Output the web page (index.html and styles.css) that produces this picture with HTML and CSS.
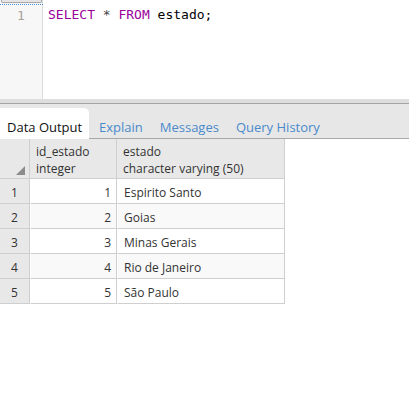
FILE: index.html
```html
<!DOCTYPE html>
<html>
<head>
<meta charset="utf-8">
<link rel="stylesheet" href="styles.css">
</head>
<body>
<div class="editor">
  <div class="focus-frag"></div>
  <div class="gutter"><span class="lineno">1</span></div>
  <div class="code"><span class="kw">SELECT</span> <span class="op">*</span> <span class="kw">FROM</span> estado;</div>
</div>
<div class="splitter"></div>
<div class="tabbar">
  <div class="tab active">Data Output</div>
  <div class="tab">Explain</div>
  <div class="tab">Messages</div>
  <div class="tab">Query History</div>
</div>
<table class="grid">
  <thead>
    <tr>
      <th class="rn"><span class="corner"></span></th>
      <th class="c1">id_estado<br>integer</th>
      <th class="c2">estado<br>character varying (50)</th>
    </tr>
  </thead>
  <tbody>
    <tr><td class="rn">1</td><td class="num">1</td><td>Espirito Santo</td></tr>
    <tr class="odd"><td class="rn">2</td><td class="num">2</td><td>Goias</td></tr>
    <tr><td class="rn">3</td><td class="num">3</td><td>Minas Gerais</td></tr>
    <tr class="odd"><td class="rn">4</td><td class="num">4</td><td>Rio de Janeiro</td></tr>
    <tr><td class="rn">5</td><td class="num">5</td><td>São Paulo</td></tr>
  </tbody>
</table>
</body>
</html>
```
FILE: styles.css
```css
* { box-sizing: border-box; }
html, body { margin: 0; padding: 0; background: #fff; }
body { font-family: "Open Sans", sans-serif; font-size: 13px; color: #222; width: 409px; height: 411px; overflow: hidden; }

.editor { position: relative; height: 99px; display: flex; }
.focus-frag {
  position: absolute; left: 0; top: -3px; width: 43px; height: 8px;
  border-bottom: 1px dotted #4a90d9;
}
.focus-frag::before {
  content: ""; position: absolute; left: 1px; right: 1px; top: 0; height: 5px;
  background: #e4e4e4; border: 1px solid #a8a8a8; border-top: none; border-radius: 0 0 2px 2px;
}
.gutter { width: 43px; background: #f7f7f7; border-right: 1px solid #dcdcdc; padding-top: 6px; text-align: center; }
.lineno { font-family: "DejaVu Sans Mono", monospace; font-size: 13px; color: #a8a29a; }
.code { padding: 6px 0 0 5px; font-family: "DejaVu Sans Mono", monospace; font-size: 13px; line-height: 17px; color: #000; white-space: pre; }
.kw { color: #990099; }
.op { color: #444; }

.splitter { height: 5px; background: #dedede; border-bottom: 1px solid #a4a4a4; }

.tabbar { display: flex; align-items: flex-end; height: 35px; background: #e7e7e7; border-bottom: 1px solid #a8a8a8; }
.tab { height: 30px; line-height: 26px; padding: 5px 7px 0 10px; color: #4a8acb; font-size: 13px; margin-bottom: -1px; white-space: nowrap; }
.tab.active { height: 31px; width: 89px; padding: 6px 0 0 7px; background: #fff; color: #111; border-top-right-radius: 5px; }

.grid { border-collapse: separate; border-spacing: 0; font-size: 12px; color: #333; }
.grid th, .grid td { padding: 0; border-right: 1px solid #cfcfcf; border-bottom: 1px solid #cfcfcf; border-left: 1px solid #fff; }
.grid th { background: #e8e8e8; height: 40px; text-align: left; font-weight: normal; vertical-align: top; line-height: 17px; padding: 4px 5px 0 6px; border-left: none; }
.grid th.rn { width: 30px; position: relative; padding: 0; }
.corner {
  position: absolute; right: 4px; bottom: 3px; width: 0; height: 0;
  border-left: 9px solid transparent; border-bottom: 9px solid #8c8c8c;
}
.grid th.c1 { width: 87px; }
.grid th.c2 { width: 168px; }
.grid td { height: 25px; line-height: 21px; padding: 3px 6px 0 6px; background: #fff; vertical-align: top; }
.grid td.rn { background: #e8e8e8; text-align: center; padding: 3px 0 0 0; border-left: none; color: #333; }
.grid td.num { text-align: right; padding-right: 5px; }
.grid tr.odd td { background: #f9f9f9; }
.grid tr.odd td.rn { background: #e8e8e8; }
```
